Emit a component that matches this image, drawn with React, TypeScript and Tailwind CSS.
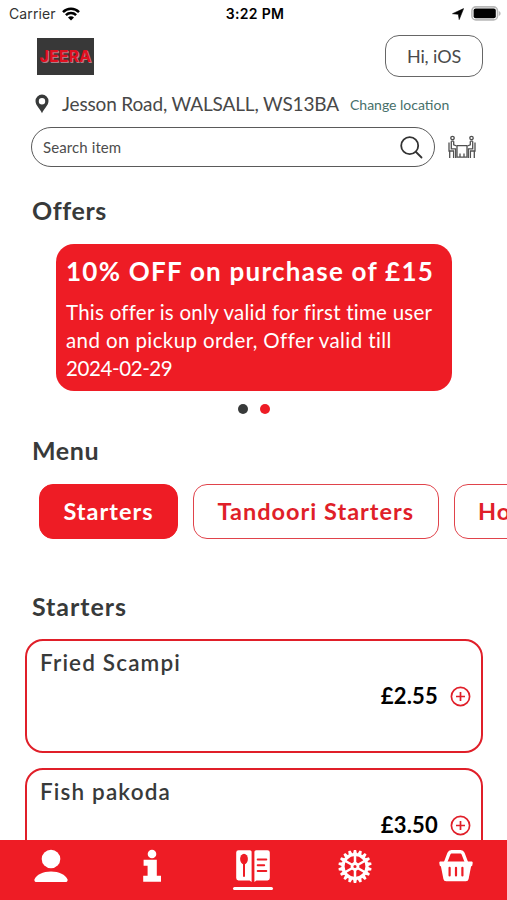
import { useState } from 'react'

interface MenuItem {
  name: string
  price: string
}

const categories = ['Starters', 'Tandoori Starters', 'House Specials']

const items: MenuItem[] = [
  { name: 'Fried Scampi', price: '£2.55' },
  { name: 'Fish pakoda', price: '£3.50' },
]

function WifiIcon() {
  return (
    <svg width="18" height="14" viewBox="0 0 18 14" fill="none" stroke="#000" strokeWidth="2.5">
      <path d="M1 5.1a11.3 11.3 0 0 1 16 0" />
      <path d="M3.9 8.2a7.2 7.2 0 0 1 10.2 0" />
      <path d="M9 13.6 6 10.5a4.2 4.2 0 0 1 6 0Z" fill="#000" stroke="none" />
    </svg>
  )
}

function BatteryIcon() {
  return (
    <svg width="30" height="15" viewBox="0 0 30 15">
      <rect x="0.9" y="0.9" width="25.6" height="13" rx="4" fill="#fff" stroke="#b8b8b8" strokeWidth="1.6" />
      <rect x="2.6" y="2.6" width="22.2" height="9.6" rx="2" fill="#000" />
      <path d="M27.8 5v5c1.1-.4 1.8-1.3 1.8-2.5S28.900 5.400 27.800 5Z" fill="#b8b8b8" />
    </svg>
  )
}

function PinIcon() {
  return (
    <svg width="14" height="20" viewBox="0 0 14 20" fill="#383a3a" fillRule="evenodd">
      <path d="M7 .6A6.500 6.500 0 0 0 .5 7.100C.5 11.500 5 14.800 7 19.200c2-4.400 6.500-7.700 6.500-12.100A6.500 6.500 0 0 0 7 .6Zm0 3.400a3.200 3.200 0 1 1 0 6.400A3.200 3.200 0 0 1 7 4Z" />
    </svg>
  )
}

function TableIcon() {
  return (
    <svg width="28" height="25" viewBox="0 0 28 25" fill="none" stroke="#505050" strokeWidth="1.3">
      <circle cx="4.500" cy="3" r="1.700" />
      <circle cx="23.500" cy="3" r="1.700" />
      <path d="M3.300 6.200v7.600h4.400v9.200M5.700 6.200v3.600l3 1.200M3.300 6.200h2.400M1 7.500V16h4.600v7M1.700 16.500V23" />
      <path d="M24.700 6.200v7.600h-4.400v9.200M22.300 6.200v3.600l-3 1.200M24.700 6.200h-2.400M27 7.500V16h-4.600v7M26.300 16.500V23" />
      <path d="M8.800 10.600h10.400M9 10.800v11.400h10V10.800M12 18.500v3.700M16 18.500v3.700" />
    </svg>
  )
}

function UserIcon() {
  return (
    <svg width="34" height="34" viewBox="0 0 34 34" fill="#fff">
      <circle cx="17" cy="10" r="9.300" />
      <path d="M2.800 33A2.400 2.400 0 0 1 .4 30.400C2.500 25.900 9 22.600 17 22.600s14.500 3.300 16.600 7.800A2.400 2.400 0 0 1 31.200 33Z" />
    </svg>
  )
}

function InfoIcon() {
  return (
    <svg width="18" height="34" viewBox="0 0 18 34" fill="#fff">
      <circle cx="9" cy="5" r="4.300" />
      <path d="M.6 10.700h13.200v16H18v6H.2v-6h4.400V16.700h-4Z" />
    </svg>
  )
}

function BookIcon() {
  return (
    <svg width="34" height="34" viewBox="0 0 34 34">
      <path d="M2.500 1.200h11.300c1 0 1.800.8 1.800 1.800v30L13.600 31.400H2.500A2.300 2.300 0 0 1 .2 29.100V3.500A2.300 2.300 0 0 1 2.500 1.200Z" fill="#fff" />
      <path d="M20.200 1.200h11.300a2.300 2.300 0 0 1 2.300 2.300v25.600a2.300 2.300 0 0 1-2.300 2.300H20.400l-2 1.600V3c0-1 .8-1.800 1.800-1.800Z" fill="#fff" />
      <ellipse cx="8" cy="10" rx="3.900" ry="5.300" fill="#ee1c25" />
      <path d="M8 13v14M21.700 10.400h8.600M21.700 16.200h6.500M21.700 22h8.600" stroke="#ee1c25" strokeWidth="2" strokeLinecap="round" />
    </svg>
  )
}

function GearIcon() {
  const spokes = [0, 60, 120, 180, 240, 300]
  const teeth = Array.from({ length: 18 }, (_, i) => i * 20)
  return (
    <svg width="34" height="34" viewBox="-17 -17.500 34 34" fill="none" stroke="#fff">
      {teeth.map(a => (
        <path key={a} d="M-2-12.500-1.200-16.600H1.200L2-12.500Z" fill="#fff" stroke="none" transform={`rotate(${a})`} />
      ))}
      <circle r="12" strokeWidth="3.200" />
      {spokes.map(a => (
        <path key={a} d="M0-3V-11" strokeWidth="2.500" transform={`rotate(${a})`} />
      ))}
      <circle r="3" strokeWidth="2.800" />
    </svg>
  )
}

function BasketIcon() {
  return (
    <svg width="34" height="34" viewBox="0 0 34 34">
      <path d="M6.500 13.500 10 4.500c.5-1.200 1.200-1.700 2.400-1.700h9.200c1.200 0 1.900.5 2.400 1.700l3.500 9" fill="none" stroke="#fff" strokeWidth="3.400" />
      <path d="M1.500 12.500h31c.8 0 1.300.6 1.200 1.400l-.4 2.400c-.1.600-.6 1-1.200 1L29.600 29.900a2.800 2.800 0 0 1-2.800 2.300H7.200a2.800 2.800 0 0 1-2.800-2.300L1.900 17.300c-.6 0-1.100-.4-1.200-1l-.4-2.400c-.1-.8.400-1.400 1.200-1.400Z" fill="#fff" />
      <path d="M10.600 18.800v7.700M17 18.800v7.700M23.400 18.800v7.700" stroke="#ee1c25" strokeWidth="2.200" strokeLinecap="round" />
    </svg>
  )
}

function ItemCard({ item }: { item: MenuItem }) {
  return (
    <div className="h-[114px] shrink-0 rounded-[18px] border-2 border-[#e01f29] pl-[13px] pr-[10px] pt-[5px]">
      <h3 className="text-[22.5px] leading-[34px] font-semibold tracking-[1.15px]">{item.name}</h3>
      <div className="flex h-[32px] items-center justify-end gap-[12px]">
        <span className="text-[22px] leading-none font-bold tracking-[0.2px] text-black">{item.price}</span>
        <button aria-label="Add">
          <svg width="21" height="21" viewBox="0 0 21 21" fill="none" stroke="#e01f29">
            <circle cx="10.5" cy="10.5" r="9.1" strokeWidth="1.7" />
            <path d="M10.500 6v9M6 10.500h9" strokeWidth="1.7" />
          </svg>
        </button>
      </div>
    </div>
  )
}

export default function App() {
  const [category, setCategory] = useState('Starters')
  const tabs = [
    { id: 'profile', icon: <UserIcon /> },
    { id: 'info', icon: <InfoIcon /> },
    { id: 'menu', icon: <BookIcon /> },
    { id: 'settings', icon: <GearIcon /> },
    { id: 'basket', icon: <BasketIcon /> },
  ]

  return (
    <div className="flex h-[900px] w-[507px] flex-col overflow-hidden bg-white font-[Lato,sans-serif] text-[#383a3a]">
      {/* Status bar */}
      <div className="grid h-[27px] shrink-0 grid-cols-3 items-center pl-[9px] pr-[6px] font-[Inter,sans-serif] text-[14px] text-black">
        <div className="flex items-center gap-[6px]">
          <span className="tracking-[0.1px] text-[#333]">Carrier</span>
          <WifiIcon />
        </div>
        <span className="text-center font-semibold tracking-[0.3px]">3:22 PM</span>
        <div className="flex items-center justify-end gap-[7px]">
          <svg width="12" height="12" viewBox="0 0 12 12"><path d="M11.600.6 7.200 11.600 6.300 6.300.5 5.700Z" fill="#000" stroke="#000" strokeWidth="0.6" strokeLinejoin="round" /></svg>
          <BatteryIcon />
        </div>
      </div>

      {/* Header */}
      <div className="mt-px flex h-[56px] shrink-0 items-center justify-between pl-[37px] pr-[24px]">
        <div className="flex h-[37px] w-[57px] items-center justify-center bg-[#383838]">
          <span className="font-[Inter,sans-serif] text-[16px] leading-none font-extrabold text-[#e0101f] [text-shadow:1px_1px_0_#a87f88]">JEERA</span>
        </div>
        <button className="h-[42px] w-[98px] rounded-[14px] border border-[#666] text-[18px] tracking-[-0.1px] text-[#4a4a4a]">Hi, iOS</button>
      </div>

      {/* Location */}
      <div className="flex h-[40px] shrink-0 items-center pl-[35px]">
        <PinIcon />
        <span className="ml-[13px] text-[19px] tracking-[-0.15px] whitespace-nowrap text-[#484848]">Jesson Road, WALSALL, WS13BA</span>
        <span className="ml-[11px] text-[14px] whitespace-nowrap text-[#47706a]">Change location</span>
      </div>

      {/* Search */}
      <div className="mt-[3px] flex shrink-0 items-center gap-[13px] pl-[31px]">
        <div className="flex h-[40px] w-[404px] items-center justify-between rounded-[20px] border-[1.5px] border-[#5a5a5a] pl-[11px] pr-[11px]">
          <span className="text-[15px] tracking-[0.1px] text-[#4d4d4d]">Search item</span>
          <svg width="23" height="23" viewBox="0 0 23 23" fill="none" stroke="#333" strokeWidth="1.8" strokeLinecap="round">
            <circle cx="9.7" cy="9.7" r="8.5" />
            <path d="m16 16 5.500 5.500" />
          </svg>
        </div>
        <TableIcon />
      </div>

      {/* Offers */}
      <h2 className="mt-[25px] shrink-0 pl-[32px] text-[25px] leading-[36px] font-bold tracking-[0.6px]">Offers</h2>
      <div className="mt-[16px] ml-[56px] h-[147px] w-[396px] shrink-0 rounded-[18px] bg-[#ee1c25] pt-[9px] pl-[10px] text-white">
        <h3 className="text-[26px] leading-[36px] font-bold tracking-[1.25px] whitespace-nowrap">10% OFF on purchase of £15</h3>
        <p className="mt-[9px] flex flex-col text-[20.5px] leading-[28px] whitespace-nowrap">
          <span className="tracking-[0.25px]">This offer is only valid for first time user</span>
          <span className="tracking-[0.4px]">and on pickup order, Offer valid till</span>
          <span className="tracking-[-0.4px]">2024-02-29</span>
        </p>
      </div>
      <div className="mt-[13px] flex shrink-0 justify-center gap-[12px]">
        <span className="size-[10px] rounded-full bg-[#383a3a]" />
        <span className="size-[10px] rounded-full bg-[#ee1c25]" />
      </div>

      {/* Categories */}
      <h2 className="mt-[18px] shrink-0 pl-[32px] text-[25px] leading-[36px] font-bold tracking-[0.6px]">Menu</h2>
      <div className="mt-[16px] flex shrink-0 gap-[15px] overflow-hidden pl-[39px]">
        {categories.map(c => (
          <button
            key={c}
            onClick={() => setCategory(c)}
            className={`h-[55px] shrink-0 rounded-[14px] border px-[23.5px] text-[23.5px] font-bold tracking-[1px] whitespace-nowrap ${c === category ? 'border-[#ee1c25] bg-[#ee1c25] text-white' : 'border-[#e0434b] text-[#e01f29]'}`}
          >
            {c}
          </button>
        ))}
      </div>

      {/* Items */}
      <h2 className="mt-[49px] shrink-0 pl-[32px] text-[25px] leading-[36px] font-bold tracking-[0.95px]">{category}</h2>
      <div className="mt-[15px] flex min-h-0 flex-1 flex-col gap-[15px] overflow-hidden pr-[24px] pl-[25px]">
        {items.map(item => (
          <ItemCard key={item.name} item={item} />
        ))}
      </div>

      {/* Tab bar */}
      <nav className="grid h-[60px] shrink-0 grid-cols-5 bg-[#ee1c25]">
        {tabs.map(tab => (
          <button key={tab.id} aria-label={tab.id} className="flex flex-col items-center pt-[9px]">
            {tab.icon}
            {tab.id === 'menu' && <span className="mt-[4px] h-[3px] w-[40px] rounded-full bg-white" />}
          </button>
        ))}
      </nav>
    </div>
  )
}
